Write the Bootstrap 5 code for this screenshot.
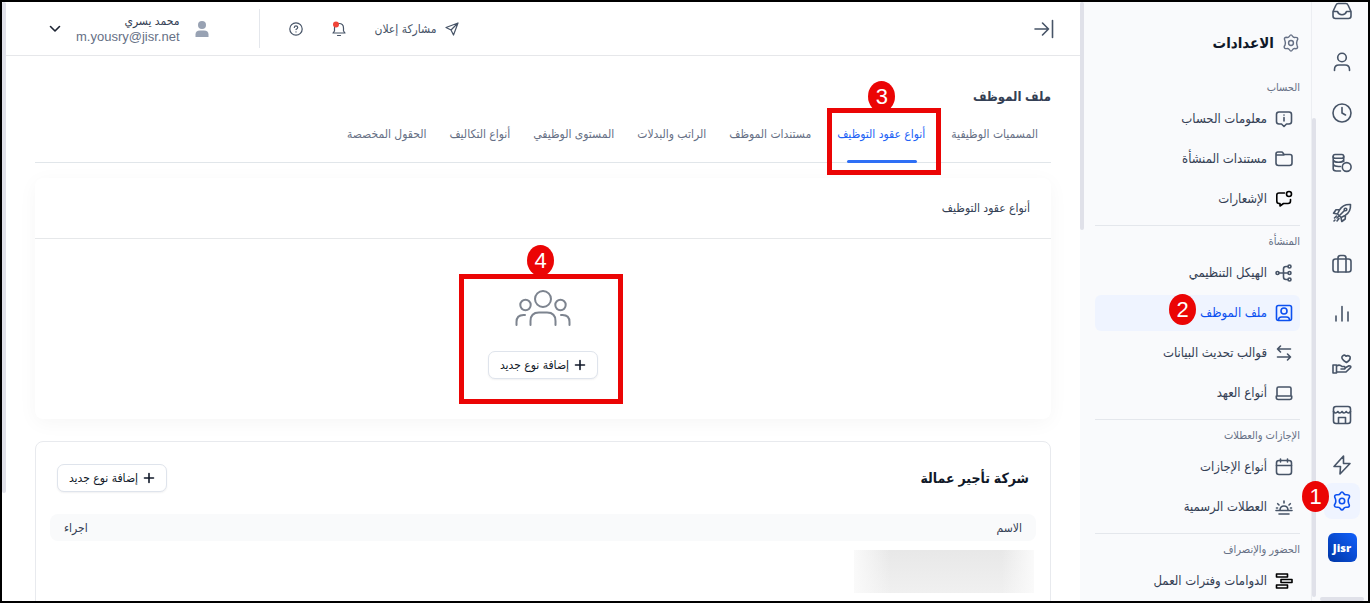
<!DOCTYPE html>
<html lang="ar" dir="rtl">
<head>
<meta charset="utf-8">
<meta name="viewport" content="width=device-width, initial-scale=1">
<title>ملف الموظف</title>
<link href="https://cdn.jsdelivr.net/npm/bootstrap@5.3.0/dist/css/bootstrap.min.css" rel="stylesheet">
<script src="https://cdn.jsdelivr.net/npm/bootstrap@5.3.0/dist/js/bootstrap.bundle.min.js" defer></script>
<style>
  :root { --ink: #344054; --soft: #667085; --line: #e4e7ec; --brand: #0b50f0; --thumb: #e0e1e9; --mark: #eb0505; }
  body { font-family: "Liberation Sans", "DejaVu Sans Condensed", "DejaVu Sans", sans-serif; font-size: 12px; line-height: 20px; color: var(--ink); border: 2px solid #000; }
  a { color: inherit; text-decoration: none; }
  ul { list-style: none; margin: 0; padding: 0; }
  svg { display: block; flex: none; fill: none; stroke: currentColor; stroke-width: 1.6; stroke-linecap: round; stroke-linejoin: round; }
  .thin { stroke-width: 1.2; }
  .thick { stroke-width: 2; }
  .tint { background: #f9fafc; }
  .rail { width: 52px; color: #475467; position: relative; z-index: 3; }
  .rail-list { height: 473px; }
  .rail-tile { width: 36px; height: 36px; margin-top: 8px; border-radius: 8px; background: #eff4ff; color: var(--brand); }
  .app-tile { width: 29px; height: 29px; margin-top: 14px; border-radius: 6px; background: linear-gradient(45deg, #0036a5, #1260fb); color: #fff; font: 800 11px "Open Sans", sans-serif; }
  .track { width: 4px; flex: none; }
  .thumb { background: var(--thumb); border-radius: 2px; }
  .side { width: 228px; padding: 0 11px; border-right: 1px solid #eceef2; }
  .side-title { height: 54px; margin-top: 14px; font-size: 15px; font-weight: bold; color: #101828; }
  .side-title svg { color: #667085; }
  .side-group { border-top: 1px solid var(--line); padding: 5px 0 8px; }
  .side-group:first-of-type { border-color: transparent; }
  .side-label { font-size: 11px; font-weight: normal; color: var(--soft); margin: 0 0 4px; line-height: 20px; }
  .side-title + .side-group { margin-top: 1px; }
  .side-link { height: 36px; margin-bottom: 4px; padding: 0 7px; gap: 8px; border-radius: 6px; font-size: 13px; }
  li:last-child > .side-link { margin-bottom: 0; }
  .side-link svg { color: #475467; }
  .side-link.current { background: #eff4ff; color: var(--brand); }
  .side-link.current svg { color: var(--brand); }
  .topbar { height: 54px; padding: 0 26px 0 43px; border-bottom: 1px solid #e6e7ea; }
  .vline { width: 1px; height: 39px; background: var(--line); }
  .tools { gap: 29px; }
  .account { gap: 15px; padding-right: 50px; }
  .who { line-height: 16px; text-align: left; }
  .who-name { text-align: right; }
  .mail { font-size: 13px; color: var(--soft); }
  .plain { border: 0; background: none; padding: 0; color: #475467; }
  .content { padding: 0 29px; }
  .page-title { font-size: 13px; font-weight: bold; margin: 31px 0 0; line-height: 20px; }
  .tabs { height: 56px; border-bottom: 1px solid #e1e6ea; padding: 0 13px; gap: 23px; color: var(--soft); }
  .tabs a { display: block; height: 56px; padding-top: 17px; white-space: nowrap; }
  .tabs .current { color: #2263f5; padding-left: 3px; padding-right: 3px; }
  .tabs .current::after { content: ""; display: block; height: 3px; margin: 16px 8px 0 10px; border-radius: 2px; background: #2e6ff5; }
  .panel { border-radius: 8px; background: #fff; }
  .raised { margin-top: 15px; box-shadow: 0 4px 20px rgba(0,0,0,.04); }
  .raised h2 { font-size: 12px; font-weight: normal; line-height: 20px; margin: 0; padding: 20px 21px; border-bottom: 1px solid #e6e8ea; }
  .empty { height: 180px; padding-top: 51px; }
  .empty-art { color: #7d848f; margin-bottom: 25px; }
  .outlined { margin-top: 22px; border: 1px solid #e8eaee; padding: 22px 14px; flex: 1; }
  .outlined h2 { font-size: 14px; font-weight: bold; color: #101828; margin: 0; }
  .outlined-head { padding: 0 7px; margin-bottom: 22px; }
  .btn-add { --bs-btn-padding-x: 10px; --bs-btn-padding-y: 0; --bs-btn-font-size: 12px; --bs-btn-border-color: #dfe4ec; --bs-btn-color: #101828; --bs-btn-bg: #fff; --bs-btn-border-radius: 7px; min-width: 110px; height: 28px; box-shadow: 0 1px 2px rgba(16,24,40,.06); display: inline-flex; align-items: center; justify-content: center; gap: 5px; }
  .names { width: 100%; border-collapse: separate; border-spacing: 0; }
  .names th { height: 27px; background: #f9fafb; font-weight: normal; padding: 0 14px; }
  .names th:first-child { border-radius: 0 8px 8px 0; }
  .names th:last-child { border-radius: 8px 0 0 8px; text-align: left; }
  .names td { padding: 9px 2px 0; }
  .veil { width: 180px; height: 43px; background: linear-gradient(90deg, #fafafa, rgba(250,250,250,0) 20%, rgba(250,250,250,0) 82%, #fafafa), linear-gradient(#e8e8e8, #f0f0f0); }
  .step { position: absolute; width: 27px; height: 31px; border-radius: 50%; background: var(--mark); color: #fff; font: 22px/31px "Liberation Sans", sans-serif; text-align: center; z-index: 3; }
  .ring { position: absolute; border: 5px solid var(--mark); z-index: 2; pointer-events: none; }
  .s1 { right: 31px; top: 6px; } .s2 { right: 104px; top: -1px; }
  .s3 { right: 33px; top: -26px; } .s4 { right: 44px; top: -45px; }
  .r3 { inset: 1px -13px -13px -7px; } .r4 { inset: -16px -25px -25px -29px; }
</style>
</head>
<body class="d-flex vh-100 overflow-hidden">

<nav class="rail tint d-flex flex-column align-items-center flex-shrink-0" aria-label="الأقسام">
  <ul class="rail-list d-flex flex-column justify-content-between flex-shrink-0">
    <li><a href="#" aria-label="الوارد"><svg width="20" height="20" viewBox="0 0 20 20"><path d="M1 9.500 4 3q.6-1.500 2.200-1.500h7.600Q15.400 1.500 16 3l3 6.500V14q0 2.500-2.500 2.500h-13Q1 16.500 1 14zh4.500q1 3.200 4.500 3.200t4.500-3.200H19"/></svg></a></li>
    <li><a href="#" aria-label="الموظفون"><svg width="20" height="20" viewBox="0 0 20 20"><circle cx="10" cy="5.500" r="4.300"/><path d="M2.500 18.500v-1q0-4.500 4.500-4.500h6q4.500 0 4.500 4.500v1"/></svg></a></li>
    <li><a href="#" aria-label="الحضور"><svg width="20" height="20" viewBox="0 0 20 20"><circle cx="10" cy="10" r="9"/><path d="M10 4.500V10l3.500 2"/></svg></a></li>
    <li><a href="#" aria-label="الرواتب"><svg width="20" height="20" viewBox="0 0 20 20"><rect x="1.200" y="1.500" width="10.500" height="3.700" rx="1.800"/><path d="M1.200 3.500v12.300q0 2.200 3 2.200H8.500M11.700 3.500V8.500M1.500 7.500q1 1.800 5 1.800t5-1.800M1.500 11.700q1 1.800 5 1.800H8.500"/><circle cx="14.700" cy="14" r="4.400"/></svg></a></li>
    <li><a href="#" aria-label="الأداء"><svg width="20" height="20" viewBox="0 0 20 20"><path d="M18.500 1.500Q11 1 7.500 7l-2 4 3.500 3.500 4-2q6-3.500 5.500-11zM8 6.500l-4 .3-2.500 3.400 4 .8M13.500 12l-.3 4-3.400 2.500-.8-4M12.500 7.500 5 15M4.500 13l-2 2M7 15.500l-2 2.500M2 18l1-1"/><circle cx="13.500" cy="6.500" r="1.300"/></svg></a></li>
    <li><a href="#" aria-label="التوظيف"><svg width="20" height="20" viewBox="0 0 20 20"><rect x="1" y="5" width="18" height="13" rx="2.500"/><path d="M6 18V4q0-2.500 2.500-2.500h3Q14 1.500 14 4v14"/></svg></a></li>
    <li><a href="#" aria-label="التقارير"><svg width="20" height="20" viewBox="0 0 20 20"><path d="M4 12v5M10 2.500v14.500M16 8v9"/></svg></a></li>
    <li><a href="#" aria-label="المزايا"><svg width="20" height="20" viewBox="0 0 20 20"><path d="M14.500 8.500Q8 4.500 10.700 1.800q2-1.500 3.300.4 2.500-1.500 4 .6 1 3-3.500 5.700zM1 11h3.500v8H1zM4.500 12q3-2 5.500.5h2.500q1.500 1.500 0 2.500H9M13 14l4-2.300q2.500 0 1.500 2L14 18H4.500"/></svg></a></li>
    <li><a href="#" aria-label="المتجر"><svg width="20" height="20" viewBox="0 0 20 20"><rect x="1.500" y="1.500" width="17" height="17" rx="2.500"/><path d="M1.500 6.500q2 3 4.300 0 2 3 4.200 0 2 3 4.200 0 2.200 3 4.300 0M6.500 18v-5.500h7V18"/></svg></a></li>
    <li><a href="#" aria-label="الأتمتة"><svg width="20" height="20" viewBox="0 0 20 20"><path d="M11.500 1 2 11.500h6.500L8 19l10-10.500h-6.500z"/></svg></a></li>
  </ul>
  <div class="position-relative">
    <a href="#" class="rail-tile d-flex align-items-center justify-content-center" aria-label="الاعدادات"><svg width="20" height="20" viewBox="0 0 20 20"><path d="M8.300 2.500Q10-.500 11.700 2.500q.8 1.400 2.500 1.300 3.500-.3 3.300 2-.1.700-.8 1.700-1 2.500 0 5 1.700 3.500-1.300 3.800l-1.200-.1q-1.700-.1-2.500 1.300-1.700 3-3.400 0-.8-1.400-2.500-1.300-3.500.3-3.400-2 .1-.7.900-1.700 1-2.500 0-5Q1.600 4 4.600 3.700l1.200.1q1.700.1 2.500-1.300z"/><circle cx="10" cy="10" r="2.700"/></svg></a>
    <span class="step s1">1</span>
  </div>
  <a href="#" class="app-tile d-flex align-items-center justify-content-center flex-shrink-0" dir="ltr">Jisr</a>
  <div class="thumb align-self-stretch mx-1 mt-auto flex-shrink-0 pt-1"></div>
</nav>
<div class="track tint d-flex flex-column"><div class="thumb mb-1 mt-auto" style="height:80%"></div></div>

<aside class="side tint flex-shrink-0">
  <div class="side-title d-flex align-items-center gap-2"><svg width="18" height="18" viewBox="0 0 20 20"><path d="M8.300 2.500Q10-.500 11.700 2.500q.8 1.400 2.500 1.300 3.500-.3 3.300 2-.1.700-.8 1.700-1 2.500 0 5 1.700 3.500-1.300 3.800l-1.200-.1q-1.700-.1-2.500 1.300-1.700 3-3.400 0-.8-1.400-2.500-1.300-3.500.3-3.400-2 .1-.7.900-1.700 1-2.500 0-5Q1.600 4 4.600 3.700l1.200.1q1.700.1 2.500-1.300z"/><circle cx="10" cy="10" r="2.700"/></svg>الاعدادات</div>
  <section class="side-group">
    <h2 class="side-label">الحساب</h2>
    <ul>
      <li><a href="#" class="side-link d-flex align-items-center"><svg width="18" height="18" viewBox="0 0 18 18"><path d="M4 2h10q2.500 0 2.500 2.500v7Q16.500 14 14 14h-2.500L9 16.500 6.500 14H4q-2.500 0-2.500-2.500v-7Q1.500 2 4 2zM9 7.500v3.500M9 5v.1"/></svg>معلومات الحساب</a></li>
      <li><a href="#" class="side-link d-flex align-items-center"><svg width="18" height="18" viewBox="0 0 18 18"><path d="M1 13V4q0-2 2-2h3.500q1 0 1.500 1l1 1.500h6q2 0 2 2V13q0 2.500-2.500 2.500h-11Q1 15.500 1 13zM1 5h8"/></svg>مستندات المنشأة</a></li>
      <li><a href="#" class="side-link d-flex align-items-center"><svg class="text-black" width="18" height="18" viewBox="0 0 18 18"><path d="M9.500 3H4Q1.800 3 1.800 5v6q0 2.500 2.200 2.500h1V16l3.500-2.500H13q2.500 0 2.500-2.500V9.500"/><circle cx="14" cy="4" r="2.500"/></svg>الإشعارات</a></li>
    </ul>
  </section>
  <section class="side-group">
    <h2 class="side-label">المنشأة</h2>
    <ul>
      <li><a href="#" class="side-link d-flex align-items-center"><svg width="18" height="18" viewBox="0 0 18 18"><circle cx="2.500" cy="9" r="1.500"/><circle cx="14.500" cy="2.500" r="1.500"/><circle cx="14.500" cy="9" r="1.500"/><circle cx="14.500" cy="15.500" r="1.500"/><path d="M4 9h9M13 2.500h-2q-2.500 0-2.500 2.500v8q0 2.500 2.500 2.500h2"/></svg>الهيكل التنظيمي</a></li>
      <li class="position-relative"><a href="#" class="side-link current d-flex align-items-center" aria-current="page"><svg width="18" height="18" viewBox="0 0 18 18"><rect x="1.500" y="1.500" width="15" height="15" rx="2"/><circle cx="9" cy="7" r="3"/><path d="M3.500 16q0-3 3-3h5q3 0 3 3"/></svg>ملف الموظف</a><span class="step s2">2</span></li>
      <li><a href="#" class="side-link d-flex align-items-center"><svg width="18" height="18" viewBox="0 0 18 18"><path d="M15.500 5H2.500L5.500 2M2.500 5l3 3M2.500 13h13l-3-3M15.500 13l-3 3"/></svg>قوالب تحديث البيانات</a></li>
      <li><a href="#" class="side-link d-flex align-items-center"><svg width="18" height="18" viewBox="0 0 18 18"><path d="M2 12V4.500Q2 3 3.500 3h11Q16 3 16 4.500V12M1.300 12h15.400v1.500q0 2-2 2H3.300q-2 0-2-2z"/></svg>أنواع العهد</a></li>
    </ul>
  </section>
  <section class="side-group">
    <h2 class="side-label">الإجازات والعطلات</h2>
    <ul>
      <li><a href="#" class="side-link d-flex align-items-center"><svg width="18" height="18" viewBox="0 0 18 18"><rect x="1.500" y="2.500" width="15" height="14" rx="2.500"/><path d="M1.500 7.500h15M5.500 1v3M12.500 1v3"/></svg>أنواع الإجازات</a></li>
      <li><a href="#" class="side-link d-flex align-items-center"><svg width="18" height="18" viewBox="0 0 18 18"><path d="M1 12.500h16M4 16h10M5 12.500q0-4.500 4-4.500t4 4.500M9 5V3M4 7 2.700 5.700M14 7l1.300-1.300M2.500 10H1.500M15.500 10h1"/></svg>العطلات الرسمية</a></li>
    </ul>
  </section>
  <section class="side-group">
    <h2 class="side-label">الحضور والإنصراف</h2>
    <ul>
      <li><a href="#" class="side-link d-flex align-items-center"><svg class="text-black" width="18" height="18" viewBox="0 0 18 18"><rect x="1.500" y="2" width="11" height="3"/><rect x="6" y="7.500" width="11" height="3"/><rect x="1.500" y="13" width="11" height="3"/></svg>الدوامات وفترات العمل</a></li>
    </ul>
  </section>
</aside>
<div class="track tint"><div class="thumb" style="height:38%"></div></div>

<div class="d-flex flex-column flex-grow-1 bg-white">
  <header class="topbar d-flex align-items-center justify-content-between flex-shrink-0">
    <button class="plain" aria-label="طي القائمة"><svg width="20" height="20" viewBox="0 0 20 20"><path d="M1 10h13.500M8.500 4l6 6-6 6M18.500 1.500v17"/></svg></button>
    <div class="d-flex align-items-center">
      <div class="tools d-flex align-items-center">
        <button class="plain d-flex align-items-center gap-2"><svg class="thin" width="14" height="14" viewBox="0 0 14 14"><path d="M13 1 1 5.500 6 8l2.500 5zM13 1 6 8"/></svg>مشاركة إعلان</button>
        <button class="plain" aria-label="التنبيهات"><svg class="thin" width="14" height="16" viewBox="0 0 14 16"><path d="M1 12h12l-1.500-2V7q0-4.500-4.500-4.500T2.500 7v3zM5.500 14.500h3"/><circle cx="4" cy="3.500" r="3" fill="#f04438" stroke="none"/></svg></button>
        <button class="plain" aria-label="المساعدة"><svg class="thin" width="14" height="14" viewBox="0 0 14 14"><circle cx="7" cy="7" r="6.200"/><path d="M5.300 5.500Q5.500 3.900 7 3.900T8.700 5.400Q8.700 6.300 7 7.500M7 9.800v.1"/></svg></button>
        <span class="vline"></span>
      </div>
      <div class="account d-flex align-items-center">
        <svg width="14" height="16" viewBox="0 0 14 16"><g fill="#98a2b3" stroke="none"><circle cx="7" cy="4" r="4"/><path d="M.5 16v-2.500Q.5 9.500 5 9.500h4q4.500 0 4.500 4V16z"/></g></svg>
        <div class="who"><div class="who-name">محمد يسري</div><div class="mail" dir="ltr">m.yousry@jisr.net</div></div>
        <button class="plain" aria-label="قائمة الحساب"><svg width="12" height="8" viewBox="0 0 12 8"><path stroke="#1d2433" d="M1.500 1.500 6 6l4.500-4.500"/></svg></button>
      </div>
    </div>
  </header>
  <main class="content d-flex flex-column flex-grow-1">
    <h1 class="page-title">ملف الموظف</h1>
    <nav class="tabs d-flex flex-shrink-0">
      <a href="#">المسميات الوظيفية</a>
      <div class="position-relative"><a href="#" class="current" aria-current="page">أنواع عقود التوظيف</a><span class="ring r3"></span><span class="step s3">3</span></div>
      <a href="#">مستندات الموظف</a>
      <a href="#">الراتب والبدلات</a>
      <a href="#">المستوى الوظيفي</a>
      <a href="#">أنواع التكاليف</a>
      <a href="#">الحقول المخصصة</a>
    </nav>
    <section class="panel raised">
      <h2>أنواع عقود التوظيف</h2>
      <div class="empty d-flex flex-column align-items-center">
        <div class="position-relative d-flex flex-column align-items-center">
          <svg class="empty-art thick" width="56" height="36" viewBox="0 0 56 36"><circle cx="28" cy="9" r="8"/><circle cx="10.500" cy="15" r="5.200"/><circle cx="45.500" cy="15" r="5.200"/><path d="M15.500 35v-4q0-8.500 8.500-8.500h8q8.500 0 8.500 8.500v4M1.500 35v-3q0-7 7-7h1.500M54.500 35v-3q0-7-7-7H46"/></svg>
          <button class="btn btn-add"><svg width="12" height="12" viewBox="0 0 12 12"><path d="M6 1.500v9M1.500 6h9"/></svg>إضافة نوع جديد</button>
          <span class="ring r4"></span><span class="step s4">4</span>
        </div>
      </div>
    </section>
    <section class="panel outlined">
      <div class="outlined-head d-flex align-items-center justify-content-between">
        <h2>شركة تأجير عمالة</h2>
        <button class="btn btn-add"><svg width="12" height="12" viewBox="0 0 12 12"><path d="M6 1.500v9M1.500 6h9"/></svg>إضافة نوع جديد</button>
      </div>
      <table class="names">
        <thead><tr><th scope="col">الاسم</th><th scope="col">اجراء</th></tr></thead>
        <tbody><tr><td><div class="veil"></div></td><td></td></tr></tbody>
      </table>
    </section>
  </main>
</div>
<div class="track bg-white"><div class="thumb" style="height:82%"></div></div>
</body>
</html>
